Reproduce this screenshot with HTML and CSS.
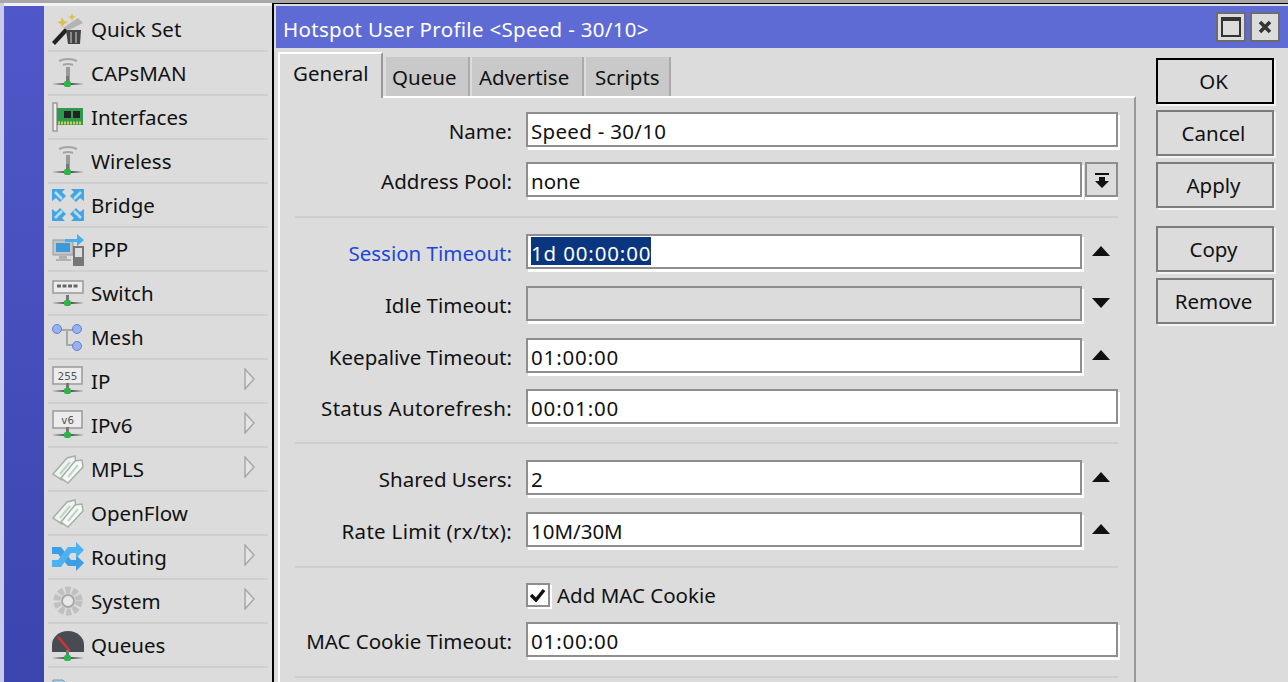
FILE: index.html
```html
<!DOCTYPE html>
<html lang="en">
<head>
<meta charset="utf-8">
<title>Hotspot User Profile</title>
<link rel="stylesheet" href="styles.css">
</head>
<body>
<svg class="defs" width="0" height="0" aria-hidden="true">
  <defs>
    <linearGradient id="fade"><stop offset="0" stop-color="#ccc"/><stop offset=".5" stop-color="#333"/><stop offset="1" stop-color="#ccc"/></linearGradient>
    <g id="net"><rect x="2" y="27" width="30" height="2" fill="url(#fade)"/><rect x="15" y="20" width="3" height="8" fill="#777"/><rect x="13" y="25" width="7" height="6" rx="2" fill="#2fb24c"/></g>
    <g id="ant"><path d="M8 5q9-4 18 0M12 9q5-2 10 0" fill="none" stroke="#a4a4a4" stroke-width="2"/><rect x="15" y="11" width="4" height="15" fill="#9a9a9a"/><use href="#net"/></g>
    <g id="tag">
      <path d="M2 22 16 6l8-2 1 8-14 16z" fill="#eef4ee" stroke="#a6aea6" stroke-width="1.500"/>
      <path d="M10 26 24 9l7-1 1 7-15 16z" fill="#f6faf6" stroke="#a6aea6" stroke-width="1.500"/>
      <path d="M9 22 19 10M17 25 27 13" stroke="#c4d2c4" stroke-width="2"/>
    </g>
    <g id="corner"><path d="M1 1h13l-3 3 4 4-6 6-4-4-4 3z" fill="#43a4e4"/><path d="M4 4l7 7" stroke="#b6def6" stroke-width="2.500"/></g>
    <path id="chev" d="M1 1v20l9-10z" fill="#e4e4e4" stroke="#a8a8a8" stroke-width="1.500"/>
  </defs>
</svg>
<div class="screen">
  <div class="edge"></div>
  <div class="rail"></div>
  <nav class="menu">
    <div class="item"><svg class="ic" viewBox="0 0 34 34"><path d="M11 5l2 4 4 1-4 2-2 4-1-4-4-2 4-1zM21 1l1 3 3 1-3 1-1 3-1-3-3-1 3-1z" fill="#dcc04a"/><path d="M1 30 14 16l3 3L4 33z" fill="#222"/><path d="M12 16 27 6l5 5-14 7z" fill="#b4b4b4"/><path d="M15 18h15l-1 14H17z" fill="#444"/><path d="M20 20v11M25 20v11" stroke="#8c8c8c" stroke-width="2"/></svg><span>Quick Set</span></div>
    <div class="item"><svg class="ic" viewBox="0 0 34 34"><use href="#ant"/></svg><span>CAPsMAN</span></div>
    <div class="item"><svg class="ic" viewBox="0 0 34 34"><path d="M2 3h4v28H2z" fill="#eee" stroke="#999" stroke-width="1.500"/><rect x="6" y="8" width="26" height="17" fill="#2f9a4e"/><rect x="13" y="11" width="7" height="7" fill="#222"/><rect x="22" y="11" width="7" height="7" fill="#222"/><path d="M7 23h24" stroke="#d8c860" stroke-width="3" stroke-dasharray="2 1"/></svg><span>Interfaces</span></div>
    <div class="item"><svg class="ic" viewBox="0 0 34 34"><use href="#ant"/></svg><span>Wireless</span></div>
    <div class="item"><svg class="ic" viewBox="0 0 34 34"><use href="#corner"/><use href="#corner" transform="matrix(-1 0 0 1 34 0)"/><use href="#corner" transform="matrix(1 0 0 -1 0 34)"/><use href="#corner" transform="matrix(-1 0 0 -1 34 34)"/></svg><span>Bridge</span></div>
    <div class="item"><svg class="ic" viewBox="0 0 34 34"><rect x="2" y="8" width="20" height="15" fill="#c4c4c4" stroke="#999"/><rect x="5" y="11" width="14" height="9" fill="#3c9ad8"/><path d="M8 24h8v3h4v2H5v-2h3z" fill="#b0b0b0"/><rect x="22" y="14" width="11" height="20" fill="#777"/><rect x="24" y="16" width="7" height="9" fill="#ddd"/><path d="M14 7h12V2l7 6-7 6V10H14z" fill="#47aee8"/></svg><span>PPP</span></div>
    <div class="item"><svg class="ic" viewBox="0 0 34 34"><rect x="2" y="5" width="30" height="12" fill="#ececec" stroke="#999" stroke-width="1.500"/><path d="M6 10h22" stroke="#666" stroke-width="3" stroke-dasharray="4 1.500"/><use href="#net" y="-1"/></svg><span>Switch</span></div>
    <div class="item"><svg class="ic" viewBox="0 0 34 34"><path d="M8 10h14M16 10v15h8" fill="none" stroke="#a8a8a8" stroke-width="2"/><circle cx="6" cy="9" r="4.500" fill="#9ab2ec" stroke="#5f7fd8"/><circle cx="26" cy="9" r="4.500" fill="#9ab2ec" stroke="#5f7fd8"/><circle cx="26" cy="26" r="4.500" fill="#9ab2ec" stroke="#5f7fd8"/></svg><span>Mesh</span></div>
    <div class="item"><svg class="ic" viewBox="0 0 34 34"><rect x="2" y="3" width="29" height="17" fill="#ececec" stroke="#999" stroke-width="1.500"/><text x="16.500" y="15.500" class="ictext" text-anchor="middle">255</text><use href="#net" y="-1"/></svg><span>IP</span><svg class="chev" viewBox="0 0 12 22"><use href="#chev"/></svg></div>
    <div class="item"><svg class="ic" viewBox="0 0 34 34"><rect x="2" y="3" width="29" height="17" fill="#ececec" stroke="#999" stroke-width="1.500"/><text x="16.500" y="15.500" class="ictext" text-anchor="middle">v6</text><use href="#net" y="-1"/></svg><span>IPv6</span><svg class="chev" viewBox="0 0 12 22"><use href="#chev"/></svg></div>
    <div class="item"><svg class="ic" viewBox="0 0 34 34"><use href="#tag"/></svg><span>MPLS</span><svg class="chev" viewBox="0 0 12 22"><use href="#chev"/></svg></div>
    <div class="item"><svg class="ic" viewBox="0 0 34 34"><use href="#tag"/></svg><span>OpenFlow</span></div>
    <div class="item"><svg class="ic" viewBox="0 0 34 34"><path d="M1 7h9l10 13h5v-5l8 8-8 8v-5h-8L7 14H1z" fill="#3c9ee4"/><path d="M1 20h6L17 7h8V2l8 8-8 8v-5h-5L10 27H1z" fill="#4db2f2"/></svg><span>Routing</span><svg class="chev" viewBox="0 0 12 22"><use href="#chev"/></svg></div>
    <div class="item"><svg class="ic" viewBox="0 0 34 34"><circle cx="17" cy="17" r="11" fill="none" stroke="#c0c0c0" stroke-width="7" stroke-dasharray="5 2"/><circle cx="17" cy="17" r="6" fill="#e8e8e8" stroke="#a8a8a8" stroke-width="2"/></svg><span>System</span><svg class="chev" viewBox="0 0 12 22"><use href="#chev"/></svg></div>
    <div class="item"><svg class="ic" viewBox="0 0 34 34"><path d="M1 24V17a16 14 0 0 1 32 0v7z" fill="#484c52"/><path d="M7 9l12 14" stroke="#e03030" stroke-width="2"/><use href="#net" y="2"/></svg><span>Queues</span></div>
    <div class="item"><svg class="ic" viewBox="0 0 34 34"><path d="M2 8h10l3 3h17v20H2z" fill="#a8cce8" stroke="#7a9ab8"/></svg><span></span></div>
  </nav>
  <section class="win">
    <header class="title">
      <span class="title-text wide">Hotspot User Profile &lt;Speed - 30/10&gt;</span>
      <span class="wbtn"><i class="max"></i></span>
      <span class="wbtn"><svg viewBox="0 0 14 14" width="14" height="14"><path d="M2 2l10 10M12 2 2 12" stroke="#333" stroke-width="3.500"/></svg></span>
    </header>
    <div class="content">
      <div class="left">
        <div class="tabs">
          <div class="tab on">General</div>
          <div class="tab">Queue</div>
          <div class="tab">Advertise</div>
          <div class="tab">Scripts</div>
        </div>
        <div class="panel">
          <div class="row g50"><label>Name:</label><div class="field wide">Speed - 30/10</div></div>
          <div class="row"><label>Address Pool:</label><div class="field">none</div><div class="drop"><svg viewBox="0 0 14 16" width="14" height="16"><path d="M0 1h14v2H0zM4 5h6v4h4l-7 7-7-7h4z" fill="#111"/></svg></div></div>
          <hr class="sep h1">
          <div class="row g52"><label class="blue">Session Timeout:</label><div class="field num"><span class="sel">1d 00:00:00</span></div><svg class="arr" viewBox="0 0 18 10"><path d="M9 0l9 10H0z"/></svg></div>
          <div class="row g52"><label>Idle Timeout:</label><div class="field off"></div><svg class="arr" viewBox="0 0 18 10"><path d="M0 0h18L9 10z"/></svg></div>
          <div class="row g51"><label>Keepalive Timeout:</label><div class="field num">01:00:00</div><svg class="arr" viewBox="0 0 18 10"><path d="M9 0l9 10H0z"/></svg></div>
          <div class="row"><label class="wide">Status Autorefresh:</label><div class="field num">00:01:00</div></div>
          <hr class="sep h2">
          <div class="row g52"><label>Shared Users:</label><div class="field">2</div><svg class="arr" viewBox="0 0 18 10"><path d="M9 0l9 10H0z"/></svg></div>
          <div class="row"><label class="wide">Rate Limit (rx/tx):</label><div class="field">10M/30M</div><svg class="arr" viewBox="0 0 18 10"><path d="M9 0l9 10H0z"/></svg></div>
          <hr class="sep h3">
          <div class="check-row"><span class="check"><svg viewBox="0 0 16 14" width="16" height="14"><path d="M1 7l5 5 8-10" fill="none" stroke="#111" stroke-width="3.500"/></svg></span><span>Add MAC Cookie</span></div>
          <div class="row"><label>MAC Cookie Timeout:</label><div class="field num">01:00:00</div></div>
          <hr class="sep h4">
        </div>
      </div>
      <aside class="actions">
        <button class="btn ok">OK</button>
        <button class="btn">Cancel</button>
        <button class="btn">Apply</button>
        <button class="btn gap">Copy</button>
        <button class="btn">Remove</button>
      </aside>
    </div>
  </section>
</div>
</body>
</html>
```
FILE: styles.css
```css
* { box-sizing: border-box; }
html, body { margin: 0; height: 682px; overflow: hidden; background: #dcdcdc; }
body { font: 20.5px "Noto Sans", sans-serif; color: #111; }
.defs { position: absolute; }
.screen { display: flex; height: 682px; overflow: hidden; border-top: 3px solid #a8a8a8; }
.edge { width: 4px; background: #c9cbe9; flex: none; }
.rail { width: 40px; flex: none; margin-top: 3px; background: linear-gradient(#5058c9, #3a45ae); box-shadow: 0 -3px 0 #f2f2f2; }
.menu { width: 228px; flex: none; padding: 5px 4px 0; background: #dcdcdc; box-shadow: inset 0 3px 0 #f2f2f2; }
.item { height: 44px; display: flex; align-items: center; padding-left: 4px; border-bottom: 2px solid #cfcfcf; position: relative; }
.item > span { margin-left: 6px; }
.ic { width: 34px; height: 34px; flex: none; margin-left: -1px; }
.ictext { font: 11px "DejaVu Sans Mono", monospace; fill: #555; }
.chev { width: 12px; height: 22px; position: absolute; left: 196px; top: 8px; }
.win { flex: 1; min-width: 0; border-left: 2px solid #000; border-top: 2px solid #000; margin-top: -1px; padding: 2px 0 0 2px; background: #dcdcdc; }
.title { height: 42px; background: #5f6bd4; color: #fff; display: flex; align-items: center; padding: 0 8px 0 7px; gap: 4px; }
.title-text { flex: 1; padding-top: 4px; }
.wide { letter-spacing: .3px; }
.num { letter-spacing: .85px; }
.wbtn { width: 30px; height: 30px; display: flex; align-items: center; justify-content: center; background: #dcdcdc; border: 2px solid #6c6c6c; }
.max { width: 20px; height: 20px; border: 2px solid #333; border-top-width: 4px; }
.content { display: flex; padding-left: 2px; }
.left { width: 858px; flex: none; }
.tabs { display: grid; grid-template-columns: 106px 85px 113px 86px; column-gap: 1px; align-items: end; height: 48px; position: relative; z-index: 1; }
.tab { height: 39px; padding: 1px 0 0 6px; background: #c9c9c9; display: flex; align-items: center; border-right: 2px solid #aaa; margin-left: 1px; }
.tab:nth-child(3) { padding-left: 7px; }
.tab:last-child { padding-left: 9px; }
.tab.on { height: 46px; width: 105px; padding: 0 0 6px 13px; background: #dcdcdc; border-top: 2px solid #fff; border-left: 2px solid #fff; border-right: 2px solid #999; margin: 0 0 -2px; }
.panel { border-top: 2px solid #fff; border-left: 2px solid #fff; border-right: 2px solid #999; height: 600px; padding-top: 14px; }
.row { display: flex; height: 35px; align-items: stretch; }
.row label { width: 232px; flex: none; text-align: right; padding-top: 5px; }
.blue { color: #1a47d8; }
.field { margin-left: 14px; width: 592px; background: #fff; border: 2px solid #8e8e8e; box-shadow: 2px 3px 0 0 #fff; padding: 3px 3px 0; line-height: 28px; white-space: nowrap; overflow: hidden; }
.row:has(.drop) .field, .row:has(.arr) .field { width: 556px; }
.off { background: #dcdcdc; }
.sel { background: #0a357f; color: #fff; display: inline-block; height: 26px; line-height: 28px; box-shadow: 0 -2px 0 #0a357f; }
.drop { margin-left: 3px; width: 33px; border: 2px solid #8e8e8e; box-shadow: 0 3px 0 #fff; display: flex; align-items: center; justify-content: center; }
.arr { width: 18px; height: 10px; margin: 12px 0 0 10px; fill: #111; flex: none; }
.g50 { margin-bottom: 15px; }
.g52 { margin-bottom: 17px; }
.g51 { margin-bottom: 16px; }
.sep { border: 0; height: 2px; background: #cfcfcf; margin: 0 0 0 15px; width: 823px; }
.h1 { margin-top: 19px; margin-bottom: 16px; }
.h2 { margin-top: 18px; margin-bottom: 16px; }
.h3 { margin-top: 19px; margin-bottom: 14px; }
.h4 { margin-top: 19px; }
.check-row { display: flex; align-items: center; gap: 6px; height: 25px; margin: 0 0 15px 246px; }
.check-row > span:last-child { margin-left: 1px; }
.check { width: 24px; height: 24px; background: #fff; border: 2px solid #8e8e8e; box-shadow: 2px 2px 0 #fff; display: flex; align-items: center; justify-content: center; }
.actions { display: flex; flex-direction: column; gap: 6px; margin: 10px 0 0 20px; width: 118px; flex: none; }
.btn { height: 46px; width: 118px; flex: none; font: inherit; color: inherit; background: #dcdcdc; border: 2px solid #7c7c7c; box-shadow: 2px 2px 0 #f4f4f4; padding: 0 3px 0 0; }
.ok { border-color: #000; }
.gap { margin-top: 12px; }
```
